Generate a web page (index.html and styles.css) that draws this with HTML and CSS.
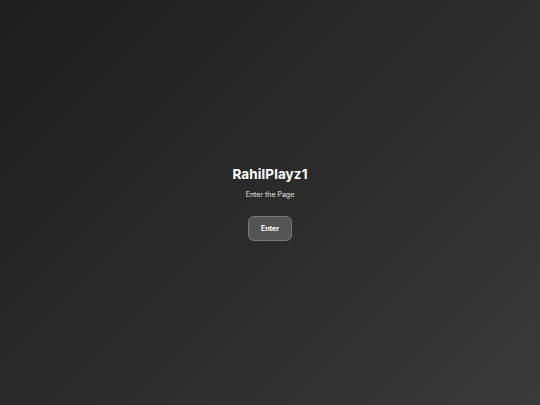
FILE: index.html
```html
<!DOCTYPE html>
<html lang="en">
<head>
<meta charset="utf-8">
<title>RahilPlayz1</title>
<link rel="stylesheet" href="styles.css">
</head>
<body>
<main class="hero">
  <h1 class="title">RahilPlayz1</h1>
  <p class="subtitle">Enter the Page</p>
  <button class="enter-btn">Enter</button>
</main>
</body>
</html>
```
FILE: styles.css
```css
html, body {
  margin: 0;
  padding: 0;
  height: 100%;
}
body {
  background: linear-gradient(135deg, #1e1e1e 0%, #2b2b2b 50%, #3a3a3a 100%);
  font-family: "Inter", "Open Sans", sans-serif;
  color: #ffffff;
}
.hero {
  height: 405px;
  display: flex;
  flex-direction: column;
  align-items: center;
  justify-content: center;
  padding-top: 1px;
  box-sizing: border-box;
}
.title {
  margin: 0;
  font-size: 13.5px;
  font-weight: 700;
  letter-spacing: 0.1px;
  line-height: 18px;
}
.subtitle {
  margin: 7px 0 0;
  font-size: 7px;
  color: #e6e6e6;
  line-height: 9px;
}
.enter-btn {
  margin-top: 17px;
  width: 44px;
  height: 25px;
  border-radius: 6px;
  border: 1px solid #7a7a7a;
  background: #545454;
  color: #ffffff;
  font-family: "Inter", sans-serif;
  font-weight: 700;
  font-size: 7px;
  padding: 0;
}
```
